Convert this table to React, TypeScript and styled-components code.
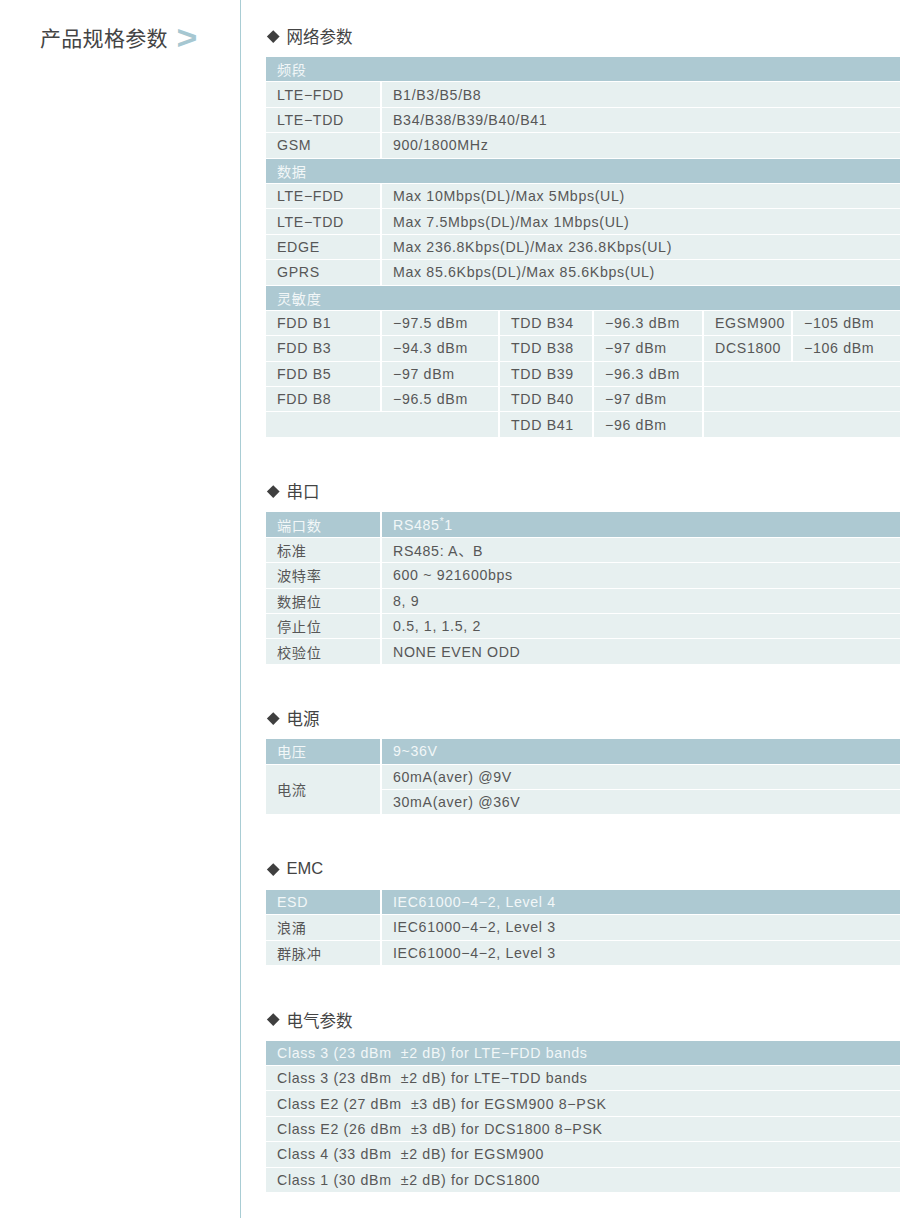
import React from "react";
import styled, { createGlobalStyle } from "styled-components";

const GlobalStyle = createGlobalStyle`
  html, body { margin: 0; padding: 0; background: #ffffff; }
  body {
    font-family: "Liberation Sans", "Noto Sans CJK SC", sans-serif;
    color: #555555;
  }
`;

const Page = styled.div`
  display: flex;
  min-height: 1218px;
  width: 910px;
`;

const Sidebar = styled.aside`
  width: 241px;
  flex: 0 0 241px;
  border-right: 1px solid #a9cdd4;
  padding: 22px 0 0 40px;
  box-sizing: border-box;
`;

const Title = styled.h1`
  margin: 0;
  display: flex;
  align-items: center;
  gap: 9px;
  height: 30px;
  font-family: "Noto Sans CJK SC", sans-serif;
  font-weight: 400;
  font-size: 21px;
  color: #444444;
  letter-spacing: 0.3px;
`;

const Chevron = styled.span`
  font-family: "Liberation Sans", sans-serif;
  font-size: 34px;
  line-height: 30px;
  color: #a6c7d1;
  font-weight: 700;
  transform: scaleX(1.05);
`;

const Main = styled.main`
  flex: 1;
  padding: 25px 10px 0 25px;
  display: flex;
  flex-direction: column;
  gap: 43.5px;
`;

const Section = styled.section`
  display: flex;
  flex-direction: column;
  gap: 10px;
`;

const Heading = styled.h2`
  margin: 0;
  height: 22px;
  display: flex;
  align-items: center;
  font-family: "Liberation Sans", "Noto Sans CJK SC", sans-serif;
  font-weight: 400;
  font-size: 16.5px;
  color: #444444;
  padding-left: 1px;
`;

const Diamond = styled.span`
  display: inline-block;
  width: 8.5px;
  height: 8.5px;
  background: #3f3f3f;
  transform: rotate(45deg);
  margin: 0 9px 0 2px;
`;

const Table = styled.div<{ $cols: string }>`
  display: grid;
  grid-template-columns: ${(p) => p.$cols};
  grid-auto-rows: 24.4px;
  column-gap: 2px;
  row-gap: 1px;
  background: #ffffff;
`;

const Cell = styled.div<{ $head?: boolean; $span?: number; $rows?: number }>`
  grid-column: span ${(p) => p.$span ?? 1};
  grid-row: span ${(p) => p.$rows ?? 1};
  display: flex;
  align-items: center;
  padding: 0 11px;
  background: ${(p) => (p.$head ? "#adc9d2" : "#e7f0f0")};
  color: ${(p) => (p.$head ? "#f2f7f8" : "#575757")};
  font-size: 14.2px;
  letter-spacing: 0.65px;
  white-space: nowrap;
  overflow: hidden;
`;

const Sup = styled.span`
  font-size: 10px;
  position: relative;
  top: -3px;
`;

const App: React.FC = () => {
  const bands: [string, string, string, string, string, string][] = [
    ["FDD B1", "−97.5 dBm", "TDD B34", "−96.3 dBm", "EGSM900", "−105 dBm"],
    ["FDD B3", "−94.3 dBm", "TDD B38", "−97 dBm", "DCS1800", "−106 dBm"],
  ];
  const bands2: [string, string, string, string][] = [
    ["FDD B5", "−97 dBm", "TDD B39", "−96.3 dBm"],
    ["FDD B8", "−96.5 dBm", "TDD B40", "−97 dBm"],
  ];
  const serial: [string, string][] = [
    ["标准", "RS485: A、B"],
    ["波特率", "600 ~ 921600bps"],
    ["数据位", "8, 9"],
    ["停止位", "0.5, 1, 1.5, 2"],
    ["校验位", "NONE EVEN ODD"],
  ];
  const power = [
    "Class 3 (23 dBm  ±2 dB) for LTE−TDD bands",
    "Class E2 (27 dBm  ±3 dB) for EGSM900 8−PSK",
    "Class E2 (26 dBm  ±3 dB) for DCS1800 8−PSK",
    "Class 4 (33 dBm  ±2 dB) for EGSM900",
    "Class 1 (30 dBm  ±2 dB) for DCS1800",
  ];

  return (
    <>
      <GlobalStyle />
      <Page>
        <Sidebar>
          <Title>
            产品规格参数<Chevron>&gt;</Chevron>
          </Title>
        </Sidebar>
        <Main>
          <Section>
            <Heading>
              <Diamond />网络参数
            </Heading>
            <Table $cols="114px 116px 92px 108px 87px 1fr">
              <Cell $head $span={6}>频段</Cell>
              <Cell>LTE−FDD</Cell>
              <Cell $span={5}>B1/B3/B5/B8</Cell>
              <Cell>LTE−TDD</Cell>
              <Cell $span={5}>B34/B38/B39/B40/B41</Cell>
              <Cell>GSM</Cell>
              <Cell $span={5}>900/1800MHz</Cell>
              <Cell $head $span={6}>数据</Cell>
              <Cell>LTE−FDD</Cell>
              <Cell $span={5}>Max 10Mbps(DL)/Max 5Mbps(UL)</Cell>
              <Cell>LTE−TDD</Cell>
              <Cell $span={5}>Max 7.5Mbps(DL)/Max 1Mbps(UL)</Cell>
              <Cell>EDGE</Cell>
              <Cell $span={5}>Max 236.8Kbps(DL)/Max 236.8Kbps(UL)</Cell>
              <Cell>GPRS</Cell>
              <Cell $span={5}>Max 85.6Kbps(DL)/Max 85.6Kbps(UL)</Cell>
              <Cell $head $span={6}>灵敏度</Cell>
              {bands.map((r) => r.map((c, i) => <Cell key={r[0] + i}>{c}</Cell>))}
              {bands2.map((r) => (
                <React.Fragment key={r[0]}>
                  {r.map((c, i) => (
                    <Cell key={i}>{c}</Cell>
                  ))}
                  <Cell $span={2} />
                </React.Fragment>
              ))}
              <Cell $span={2} />
              <Cell>TDD B41</Cell>
              <Cell>−96 dBm</Cell>
              <Cell $span={2} />
            </Table>
          </Section>

          <Section>
            <Heading>
              <Diamond />串口
            </Heading>
            <Table $cols="114px 1fr">
              <Cell $head>端口数</Cell>
              <Cell $head>
                RS485<Sup>*</Sup>1
              </Cell>
              {serial.map(([k, v]) => (
                <React.Fragment key={k}>
                  <Cell>{k}</Cell>
                  <Cell>{v}</Cell>
                </React.Fragment>
              ))}
            </Table>
          </Section>

          <Section>
            <Heading>
              <Diamond />电源
            </Heading>
            <Table $cols="114px 1fr">
              <Cell $head>电压</Cell>
              <Cell $head>9~36V</Cell>
              <Cell $rows={2}>电流</Cell>
              <Cell>60mA(aver) @9V</Cell>
              <Cell>30mA(aver) @36V</Cell>
            </Table>
          </Section>

          <Section>
            <Heading>
              <Diamond />EMC
            </Heading>
            <Table $cols="114px 1fr">
              <Cell $head>ESD</Cell>
              <Cell $head>IEC61000−4−2, Level 4</Cell>
              <Cell>浪涌</Cell>
              <Cell>IEC61000−4−2, Level 3</Cell>
              <Cell>群脉冲</Cell>
              <Cell>IEC61000−4−2, Level 3</Cell>
            </Table>
          </Section>

          <Section>
            <Heading>
              <Diamond />电气参数
            </Heading>
            <Table $cols="1fr">
              <Cell $head>Class 3 (23 dBm&nbsp;&nbsp;±2 dB) for LTE−FDD bands</Cell>
              {power.map((p) => (
                <Cell key={p}>{p.replace("  ", "\u00a0\u00a0")}</Cell>
              ))}
            </Table>
          </Section>
        </Main>
      </Page>
    </>
  );
};

export default App;
